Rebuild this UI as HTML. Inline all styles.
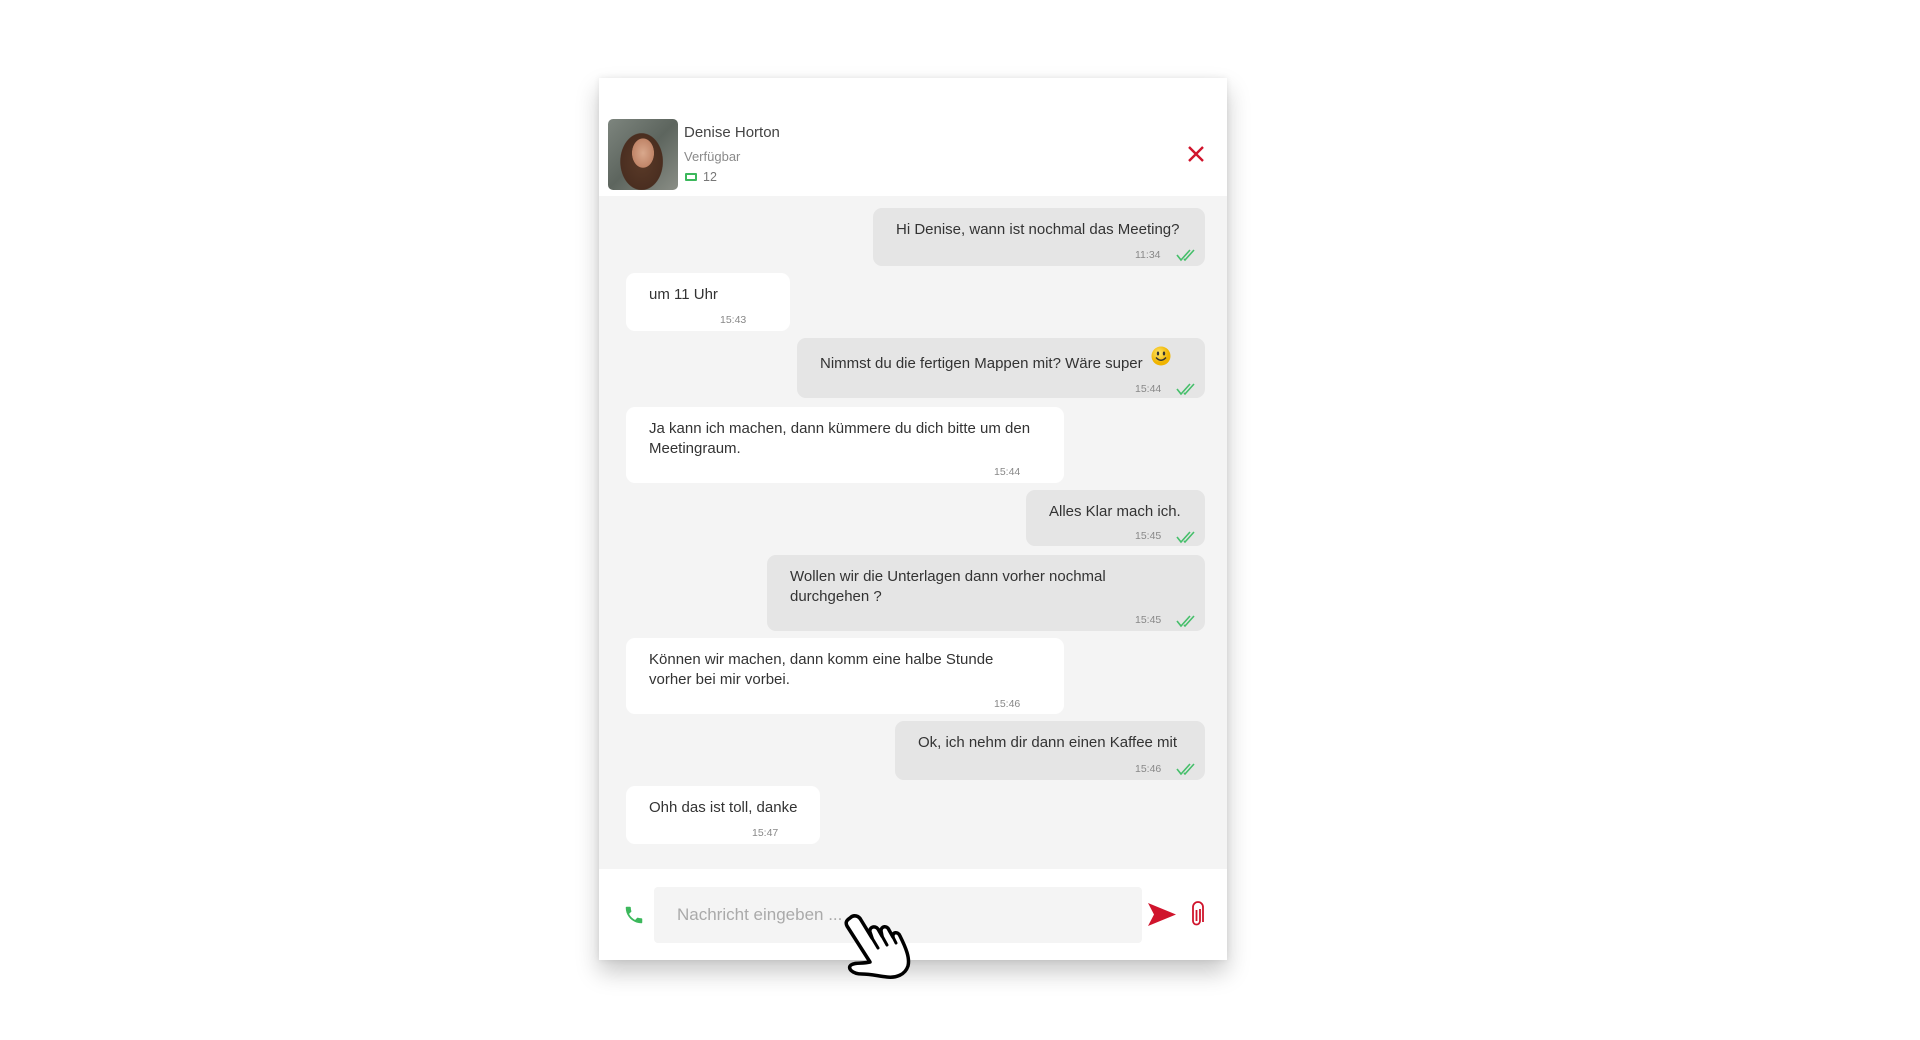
<!DOCTYPE html>
<html><head><meta charset="utf-8"><style>
*{margin:0;padding:0;box-sizing:border-box}
body{width:1920px;height:1040px;background:#fff;position:relative;overflow:hidden;font-family:"Liberation Sans",Verdana,sans-serif;color:#333}
.panel{position:absolute;left:599px;top:78px;width:628px;height:882px;background:#fff;box-shadow:0 12px 22px rgba(0,0,0,.22),0 0 6px rgba(0,0,0,.08)}
.chat{position:absolute;left:599px;top:196px;width:628px;height:673px;background:#f4f4f4}
.b{position:absolute;border-radius:9px;font-size:15px;line-height:19.5px;padding:12px 23px 0 23px}
.n{white-space:nowrap;padding-right:0}
.r{background:#e5e5e5}
.l{background:#fff}
.t{position:absolute;font-size:10.5px;color:#888}
.ck{position:absolute;width:22px;height:14px}
</style></head><body>
<div class="panel"></div>
<div style="position:absolute;left:608px;top:119px;width:70px;height:71px;border-radius:5px;background:radial-gradient(ellipse 18px 24px at 50% 48%,#d9a88c 0,#c08568 60%,transparent 62%),radial-gradient(ellipse 30px 40px at 48% 60%,#5a3a28 0,#4a2e20 70%,transparent 72%),linear-gradient(135deg,#7d857e,#5d655e 50%,#8a8e86)"></div>
<div style="position:absolute;left:684px;top:124px;font-size:15px;color:#444">Denise Horton</div>
<div style="position:absolute;left:684px;top:149px;font-size:13px;color:#8a8a8a">Verfügbar</div>
<div style="position:absolute;left:685px;top:173px;width:12px;height:8px;border:2px solid #3cb85c;border-radius:1px"></div>
<div style="position:absolute;left:703px;top:170px;font-size:12.5px;color:#777">12</div>
<svg style="position:absolute;left:1187px;top:145px" width="18" height="18" viewBox="0 0 18 18"><path d="M2 2L16 16M16 2L2 16" stroke="#d0142c" stroke-width="2.4"/></svg>
<div class="chat"></div>

<div class="b r n" style="left:873px;top:208px;width:332px;height:58px">Hi Denise, wann ist nochmal das Meeting?</div>
<div class="b l n" style="left:626px;top:273px;width:164px;height:58px">um 11 Uhr</div>
<div class="b r n" style="left:797px;top:338px;width:408px;height:60px">Nimmst du die fertigen Mappen mit? Wäre super <svg width="20" height="20" viewBox="0 0 20 20" style="vertical-align:-2px;margin-left:4px;position:relative;top:-4px"><defs><radialGradient id="sg" cx="40%" cy="35%"><stop offset="0" stop-color="#ffe76a"/><stop offset="1" stop-color="#f0b400"/></radialGradient></defs><circle cx="10" cy="10" r="9.5" fill="url(#sg)"/><ellipse cx="7" cy="7.5" rx="1.2" ry="2" fill="#333"/><ellipse cx="13" cy="7.5" rx="1.2" ry="2" fill="#333"/><path d="M5 11.5Q10 17 15 11.5" fill="none" stroke="#333" stroke-width="1.4"/></svg></div>
<div class="b l" style="left:626px;top:407px;width:438px;height:76px">Ja kann ich machen, dann kümmere du dich bitte um den Meetingraum.</div>
<div class="b r n" style="left:1026px;top:490px;width:179px;height:56px">Alles Klar mach ich.</div>
<div class="b r" style="left:767px;top:555px;width:438px;height:76px;padding-right:60px">Wollen wir die Unterlagen dann vorher nochmal durchgehen ?</div>
<div class="b l" style="left:626px;top:638px;width:438px;height:76px;padding-right:60px">Können wir machen, dann komm eine halbe Stunde vorher bei mir vorbei.</div>
<div class="b r n" style="left:895px;top:721px;width:310px;height:59px">Ok, ich nehm dir dann einen Kaffee mit</div>
<div class="b l n" style="left:626px;top:786px;width:194px;height:58px">Ohh das ist toll, danke</div>

<div class="t" style="left:1135px;top:249px">11:34</div>
<div class="t" style="left:720px;top:314px">15:43</div>
<div class="t" style="left:1135px;top:383px">15:44</div>
<div class="t" style="left:994px;top:466px">15:44</div>
<div class="t" style="left:1135px;top:530px">15:45</div>
<div class="t" style="left:1135px;top:614px">15:45</div>
<div class="t" style="left:994px;top:698px">15:46</div>
<div class="t" style="left:1135px;top:763px">15:46</div>
<div class="t" style="left:752px;top:827px">15:47</div>

<svg width="0" height="0" style="position:absolute"><defs><g id="ck"><path d="M1 7l4 5 9-10M8 11l1 1 9-10" fill="none" stroke="#45bf6a" stroke-width="1.6"/></g></defs></svg>
<svg class="ck" style="left:1176px;top:248px"><use href="#ck"/></svg>
<svg class="ck" style="left:1176px;top:382px"><use href="#ck"/></svg>
<svg class="ck" style="left:1176px;top:530px"><use href="#ck"/></svg>
<svg class="ck" style="left:1176px;top:614px"><use href="#ck"/></svg>
<svg class="ck" style="left:1176px;top:762px"><use href="#ck"/></svg>

<svg style="position:absolute;left:623px;top:903px" width="22" height="24" viewBox="0 0 24 24"><path d="M6.6 10.8c1.4 2.8 3.8 5.1 6.6 6.6l2.2-2.2c.3-.3.7-.4 1-.2 1.1.4 2.3.6 3.6.6.6 0 1 .4 1 1V20c0 .6-.4 1-1 1C10.6 21 3 13.4 3 4c0-.6.4-1 1-1h3.5c.6 0 1 .4 1 1 0 1.3.2 2.5.6 3.6.1.3 0 .7-.2 1z" fill="#3cb85c"/></svg>
<div style="position:absolute;left:654px;top:887px;width:488px;height:56px;background:#f4f4f4;border-radius:4px"></div>
<div style="position:absolute;left:677px;top:905px;font-size:17px;color:#aaa">Nachricht eingeben ...</div>
<svg style="position:absolute;left:1148px;top:903px" width="28" height="23" viewBox="0 0 28 23"><path d="M0 0L28 11.5 0 23 6 11.5Z" fill="#d0142c"/></svg>
<svg style="position:absolute;left:1189px;top:901px" width="16" height="28" viewBox="0 0 16 28"><path d="M11 8v12a3.5 3.5 0 0 1-7 0V6a5 5 0 0 1 10 0v15" fill="none" stroke="#d0142c" stroke-width="1.8"/><path d="M7.5 9v11" stroke="#d0142c" stroke-width="1.8"/></svg>
<svg style="position:absolute;left:842px;top:912px" width="72" height="68" viewBox="0 0 72 68"><path d="M8,6 C12,2 17,4 19,8 L30,26 L28,20 C27,15 33,13 36,17 L40,24 L39,19 C39,14 45,13 47,18 L51,25 C50,20 56,19 58,24 C64,36 68,46 66,54 C63,63 54,66 45,65 C36,64 28,62 20,62 C10,62 5,56 9,53 C13,50 20,52 28,50 L5,14 C3,10 5,8 8,6 Z" fill="#fff" stroke="#000" stroke-width="3.5" stroke-linejoin="round"/><path d="M30,26 L36,36 M40,24 L45,33 M51,25 L54,31" stroke="#000" stroke-width="3" stroke-linecap="round"/></svg>
</body></html>
